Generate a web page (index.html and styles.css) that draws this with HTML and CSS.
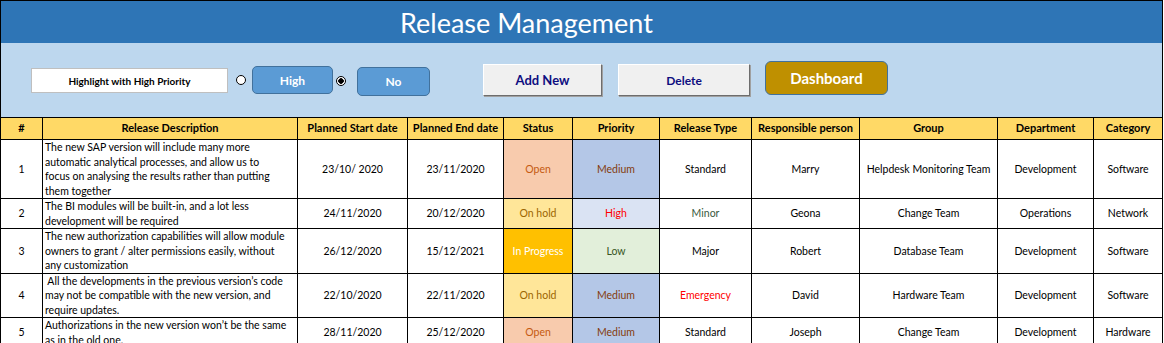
FILE: index.html
```html
<!DOCTYPE html>
<html lang="en">
<head>
<meta charset="utf-8">
<title>Release Management</title>
<link rel="stylesheet" href="styles.css">
</head>
<body>
<div class="page">
  <header class="banner"><h1 class="title">Release Management</h1></header>
  <section class="controls">
    <div class="label-box">Highlight with High Priority</div>
    <span class="radio"></span>
    <button class="pill">High</button>
    <span class="radio checked"></span>
    <button class="pill pill-no">No</button>
    <button class="bevel add">Add New</button>
    <button class="bevel del">Delete</button>
    <button class="dash">Dashboard</button>
  </section>
  <table class="grid">
    <colgroup>
      <col style="width:42px"><col style="width:255px"><col style="width:110px"><col style="width:96px"><col style="width:69px"><col style="width:87px"><col style="width:92px"><col style="width:108px"><col style="width:138px"><col style="width:96px"><col style="width:69px">
    </colgroup>
    <thead>
      <tr class="h-row">
        <th>#</th><th>Release Description</th><th>Planned Start date</th><th>Planned End date</th><th>Status</th><th>Priority</th><th>Release Type</th><th>Responsible person</th><th>Group</th><th>Department</th><th>Category</th>
      </tr>
    </thead>
    <tbody>
      <tr class="r1">
        <td>1</td><td class="desc">The new SAP version will include many more<br>automatic analytical processes, and allow us to<br>focus on analysing the results rather than putting<br>them together</td><td>23/10/ 2020</td><td>23/11/2020</td><td class="st-open">Open</td><td class="pr-med">Medium</td><td>Standard</td><td>Marry</td><td>Helpdesk Monitoring Team</td><td>Development</td><td>Software</td>
      </tr>
      <tr class="r2">
        <td>2</td><td class="desc">The BI modules will be built-in, and a lot less<br>development will be required</td><td>24/11/2020</td><td>20/12/2020</td><td class="st-hold">On hold</td><td class="pr-high">High</td><td class="t-minor">Minor</td><td>Geona</td><td>Change Team</td><td>Operations</td><td>Network</td>
      </tr>
      <tr class="r3">
        <td>3</td><td class="desc">The new authorization capabilities will allow module<br>owners to grant / alter permissions easily, without<br>any customization</td><td>26/12/2020</td><td>15/12/2021</td><td class="st-prog">In Progress</td><td class="pr-low">Low</td><td>Major</td><td>Robert</td><td>Database Team</td><td>Development</td><td>Software</td>
      </tr>
      <tr class="r4">
        <td>4</td><td class="desc">&nbsp;All the developments in the previous version’s code<br>may not be compatible with the new version, and<br>require updates.</td><td>22/10/2020</td><td>22/11/2020</td><td class="st-hold">On hold</td><td class="pr-med">Medium</td><td class="t-emerg">Emergency</td><td>David</td><td>Hardware Team</td><td>Development</td><td>Software</td>
      </tr>
      <tr class="r5">
        <td>5</td><td class="desc">Authorizations in the new version won’t be the same<br>as in the old one.</td><td>28/11/2020</td><td>25/12/2020</td><td class="st-open">Open</td><td class="pr-med">Medium</td><td>Standard</td><td>Joseph</td><td>Change Team</td><td>Development</td><td>Hardware</td>
      </tr>
    </tbody>
  </table>
</div>
</body>
</html>
```
FILE: styles.css
```css
html, body {
  margin: 0;
  padding: 0;
  background: #ffffff;
  overflow: hidden;
}
body {
  font-family: Lato, "Open Sans", sans-serif;
  color: #000;
}
.page {
  width: 1163px;
}
.banner {
  height: 42px;
  background: #2e75b6;
  border: 1px solid #000;
  border-bottom: none;
  display: flex;
  justify-content: flex-start;
  align-items: center;
  padding-left: 399px;
  box-sizing: content-box;
}
.page .banner {
  width: calc(1163px - 2px - 399px);
}
.title {
  margin: 0;
  font-weight: 400;
  font-size: 27px;
  color: #fff;
  white-space: nowrap;
}
.controls {
  height: 74px;
  background: #bdd7ee;
  border-left: 1px solid #000;
  border-right: 1px solid #000;
  display: flex;
  align-items: center;
  padding-left: 30px;
  box-sizing: border-box;
}
.label-box {
  width: 197px;
  height: 25px;
  margin-top: 1px;
  box-sizing: border-box;
  background: #fff;
  border: 1px solid #bfbfbf;
  font-size: 10px;
  font-weight: 700;
  display: flex;
  align-items: center;
  justify-content: center;
}
.radio {
  width: 8px;
  height: 8px;
  border-radius: 50%;
  border: 1px solid #000;
  background: #fff;
  margin-left: 8px;
  margin-right: 6px;
  box-sizing: content-box;
}
.radio.checked {
  background: radial-gradient(circle, #000 0 2.5px, #fff 3px);
  margin-left: 3px;
  margin-right: 11px;
  margin-top: 2px;
}
button {
  font-family: inherit;
  cursor: pointer;
  padding: 0;
}
.pill {
  width: 81px;
  height: 28px;
  background: #5b9bd5;
  border: 1px solid #41719c;
  border-radius: 5px;
  color: #fff;
  font-weight: 700;
  font-size: 12px;
}
.pill-no {
  width: 73px;
  height: 29px;
  margin-top: 2px;
}
.bevel {
  height: 32px;
  background: #f0f0f0;
  border: 1px solid;
  border-color: #ffffff #6d6d6d #6d6d6d #ffffff;
  box-shadow: 1px 1px 0 #a0a0a0;
  color: #0d0d80;
  font-weight: 700;
}
.add {
  width: 119px;
  margin-left: 53px;
  font-size: 13px;
}
.del {
  width: 132px;
  margin-left: 16px;
  font-size: 12px;
}
.dash {
  width: 123px;
  height: 34px;
  margin-left: 15px;
  margin-top: -4px;
  background: #bf9000;
  border: 1px solid #41719c;
  border-radius: 6px;
  color: #fff;
  font-weight: 700;
  font-size: 15px;
}
.grid {
  width: 1163px;
  table-layout: fixed;
  border-collapse: collapse;
  font-size: 10.5px;
}
.grid th, .grid td {
  border: 1px solid #000;
  padding: 0;
  text-align: center;
  vertical-align: middle;
  line-height: 14.5px;
  overflow: hidden;
  white-space: nowrap;
}
.grid th {
  background: #ffd966;
  font-weight: 700;
  font-size: 11px;
}
.h-row { height: 22px; }
.r1 { height: 58px; }
.r2 { height: 29px; }
.r3 { height: 44px; }
.r4 { height: 44px; }
.r5 { height: 29px; }
.grid td.desc {
  text-align: left;
  padding-left: 2px;
  padding-right: 2px;
}
.st-open { background: #f8cbad; color: #c55a11; }
.st-hold { background: #ffe699; color: #9c6500; }
.st-prog { background: #ffc000; color: #ffffff; }
.pr-med { background: #b4c7e7; color: #843c0c; }
.pr-high { background: #dae3f3; color: #ff0000; }
.pr-low { background: #e2efda; color: #375623; }
.t-minor { color: #3a5a40; }
.t-emerg { color: #ff0000; }
```
